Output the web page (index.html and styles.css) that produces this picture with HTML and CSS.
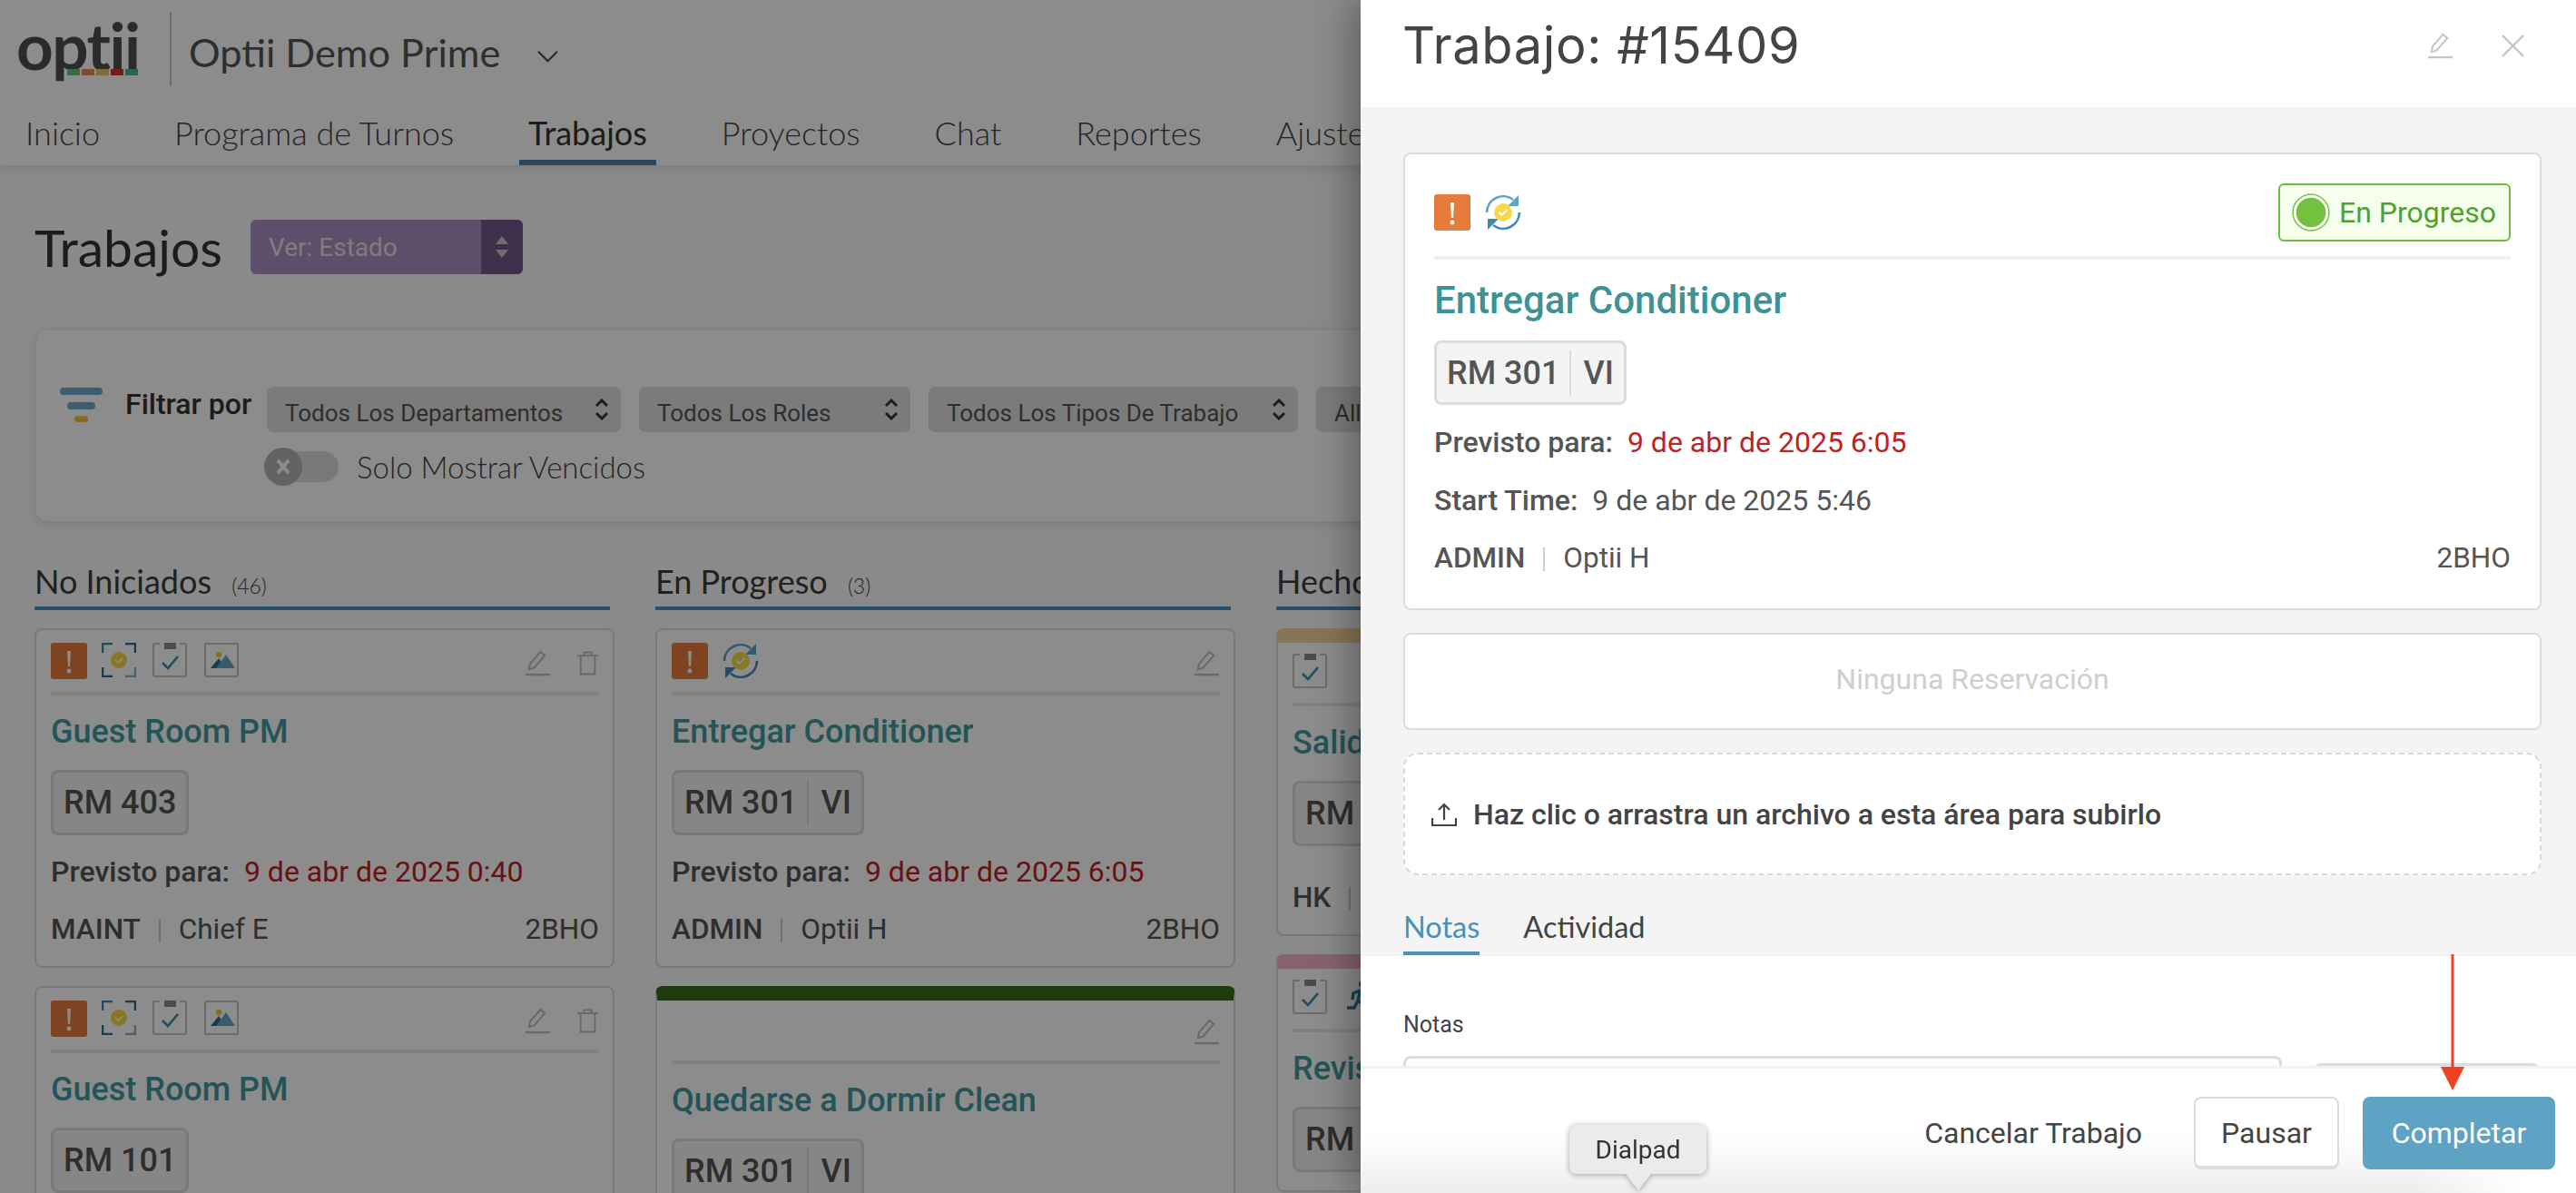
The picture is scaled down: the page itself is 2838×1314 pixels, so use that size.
FILE: index.html
```html
<!DOCTYPE html>
<html lang="es">
<head>
<meta charset="utf-8">
<title>Trabajos</title>
<link rel="stylesheet" href="styles.css">
</head>
<body>
<svg class="sprite" aria-hidden="true">
  <symbol id="i-alert" viewBox="0 0 40 40"><rect width="40" height="40" rx="3" fill="#e57b3c"/><path d="M18 9h4l-1 17h-2z" fill="#fff"/><circle cx="20" cy="31" r="2.4" fill="#fff"/></symbol>
  <symbol id="i-target" viewBox="0 0 38 38"><path d="M1 11V1h11" fill="none" stroke="#3d87ad" stroke-width="2.5"/><path d="M26 1h11v10" fill="none" stroke="#286e93" stroke-width="2.5"/><path d="M1 27v10h11" fill="none" stroke="#286e93" stroke-width="2.5"/><path d="M26 37h11V27" fill="none" stroke="#7fb0c8" stroke-width="2.5"/><circle cx="19" cy="19" r="9" fill="#f6d740"/><path d="M15 19l3 3 5-5" fill="none" stroke="#fff" stroke-width="1.6"/></symbol>
  <symbol id="i-clip" viewBox="0 0 38 38"><path d="M8 1H2a1 1 0 0 0-1 1v33a2 2 0 0 0 2 2h32a2 2 0 0 0 2-2V2a1 1 0 0 0-1-1h-6" fill="none" stroke="#c4c4c4" stroke-width="2"/><rect x="13" width="13" height="7" fill="#8b8b8b"/><path d="M11 22l6 6 11-13" fill="none" stroke="#3d8ab3" stroke-width="2.6"/></symbol>
  <symbol id="i-image" viewBox="0 0 38 38"><rect x="1" y="1" width="36" height="36" rx="2" fill="none" stroke="#c4c4c4" stroke-width="2"/><circle cx="16" cy="13" r="3.2" fill="#f4cd3a"/><path d="M7 28l9-11 5 7-3 4z" fill="#286e93"/><path d="M13 28l11-15 10 15z" fill="#6ea6c2"/></symbol>
  <symbol id="i-sync" viewBox="0 0 40 40"><path d="M2 20A18 18 0 0 1 31 6" fill="none" stroke="#5aa5c8" stroke-width="2.6"/><path d="M38 20A18 18 0 0 1 9 34" fill="none" stroke="#3d8ab3" stroke-width="2.6"/><path d="M37 1v12H25z" fill="#5aa5c8"/><path d="M3 39V27h12z" fill="#3d8ab3"/><circle cx="20" cy="20" r="10" fill="#f6d94a"/><path d="M15.500 20l3 3 6-6" fill="none" stroke="#fff" stroke-width="1.800"/></symbol>
  <symbol id="i-pen" viewBox="0 0 30 30"><path d="M5 22l1-6L18 2l5 4-12 14z" fill="none" stroke="currentColor" stroke-width="2"/><path d="M1 28h28" stroke="currentColor" stroke-width="2.400"/></symbol>
  <symbol id="i-trash" viewBox="0 0 26 30"><path d="M0 6h25M8 6V2h9v4M4 6v22h17V6" fill="none" stroke="currentColor" stroke-width="2"/></symbol>
  <symbol id="i-run" viewBox="0 0 30 38"><circle cx="19" cy="5" r="4" fill="#2f7a9e"/><path d="M17 11l-3 12 7 5-1 9M14 23l-4 8H2M16 12l-7 3-1 7M18 12l3 7 6 2" fill="none" stroke="#2f7a9e" stroke-width="3.500"/></symbol>
</svg>

<div class="app">
  <header class="topbar">
    <div class="brand">
      <div class="logo"><span class="logo-word">optii</span>
        <span class="logo-bars"><i class="b1"></i><i class="b2"></i><i class="b3"></i><i class="b4"></i><i class="b5"></i></span>
      </div>
      <div class="brand-name">Optii Demo Prime</div>
      <svg class="chev" viewBox="0 0 26 16"><path d="M1 2l12 12L25 2" fill="none" stroke="#4a4a4a" stroke-width="2.400"/></svg>
    </div>
    <nav class="nav">
      <a>Inicio</a><a>Programa de Turnos</a><a class="active">Trabajos</a><a>Proyectos</a><a>Chat</a><a>Reportes</a><a>Ajustes</a>
    </nav>
  </header>

  <main class="page">
    <div class="title-row">
      <h1>Trabajos</h1>
      <div class="view-select"><span class="view-label">Ver: Estado</span>
        <span class="view-arrows"><svg viewBox="0 0 14 24"><path d="M7 0l7 9H0zM7 24l7-9H0z" fill="#c9c9c9"/></svg></span>
      </div>
    </div>

    <section class="filters">
      <svg class="filter-icon" viewBox="0 0 47 38"><rect width="47" height="8" rx="4" fill="#6fa8cb"/><rect x="8" y="16" width="31" height="8" rx="4" fill="#6fa8cb"/><rect x="16" y="31" width="15" height="7" rx="3.500" fill="#f0c24a"/></svg>
      <div class="filter-label">Filtrar por</div>
      <div class="filter-main">
        <div class="selects">
          <div class="sel s1">Todos Los Departamentos<svg viewBox="0 0 14 24"><path d="M1 8l6-6 6 6M1 16l6 6 6-6" fill="none" stroke="#333" stroke-width="3"/></svg></div>
          <div class="sel s2">Todos Los Roles<svg viewBox="0 0 14 24"><path d="M1 8l6-6 6 6M1 16l6 6 6-6" fill="none" stroke="#333" stroke-width="3"/></svg></div>
          <div class="sel s3">Todos Los Tipos De Trabajo<svg viewBox="0 0 14 24"><path d="M1 8l6-6 6 6M1 16l6 6 6-6" fill="none" stroke="#333" stroke-width="3"/></svg></div>
          <div class="sel s4">All<svg viewBox="0 0 14 24"><path d="M1 8l6-6 6 6M1 16l6 6 6-6" fill="none" stroke="#333" stroke-width="3"/></svg></div>
        </div>
        <div class="toggle-row">
          <div class="toggle"><span class="knob"><svg viewBox="0 0 16 18"><path d="M2 2l12 14M14 2L2 16" stroke="#fff" stroke-width="4"/></svg></span></div>
          <span>Solo Mostrar Vencidos</span>
        </div>
      </div>
    </section>

    <div class="board">
      <section class="col">
        <h2>No Iniciados <small>(46)</small></h2>
        <article class="card">
          <div class="head">
            <svg class="ico"><use href="#i-alert"/></svg><svg class="ico ico-s"><use href="#i-target"/></svg><svg class="ico ico-s"><use href="#i-clip"/></svg><svg class="ico ico-s"><use href="#i-image"/></svg>
            <span class="actions"><svg class="act"><use href="#i-pen"/></svg><svg class="act-t"><use href="#i-trash"/></svg></span>
          </div>
          <h3>Guest Room PM</h3>
          <div class="room">RM 403</div>
          <p class="due"><b>Previsto para:</b><span class="late">9 de abr de 2025 0:40</span></p>
          <p class="meta"><b>MAINT</b><i></i><span>Chief E</span><em>2BHO</em></p>
        </article>
        <article class="card">
          <div class="head">
            <svg class="ico"><use href="#i-alert"/></svg><svg class="ico ico-s"><use href="#i-target"/></svg><svg class="ico ico-s"><use href="#i-clip"/></svg><svg class="ico ico-s"><use href="#i-image"/></svg>
            <span class="actions"><svg class="act"><use href="#i-pen"/></svg><svg class="act-t"><use href="#i-trash"/></svg></span>
          </div>
          <h3>Guest Room PM</h3>
          <div class="room">RM 101</div>
        </article>
      </section>

      <section class="col">
        <h2>En Progreso <small>(3)</small></h2>
        <article class="card">
          <div class="head">
            <svg class="ico"><use href="#i-alert"/></svg><svg class="ico ico-l"><use href="#i-sync"/></svg>
            <span class="actions"><svg class="act"><use href="#i-pen"/></svg></span>
          </div>
          <h3>Entregar Conditioner</h3>
          <div class="room">RM 301<i></i>VI</div>
          <p class="due"><b>Previsto para:</b><span class="late">9 de abr de 2025 6:05</span></p>
          <p class="meta"><b>ADMIN</b><i></i><span>Optii H</span><em>2BHO</em></p>
        </article>
        <article class="card barred bar-green">
          <div class="head">
            <span class="actions"><svg class="act"><use href="#i-pen"/></svg></span>
          </div>
          <h3>Quedarse a Dormir Clean</h3>
          <div class="room">RM 301<i></i>VI</div>
        </article>
      </section>

      <section class="col">
        <h2>Hecho <small>(12)</small></h2>
        <article class="card barred bar-tan">
          <div class="head"><svg class="ico ico-c"><use href="#i-clip"/></svg></div>
          <h3>Salida</h3>
          <div class="room">RM 205</div>
          <p class="meta spaced"><b>HK</b><i></i></p>
        </article>
        <article class="card barred bar-pink">
          <div class="head"><svg class="ico ico-c"><use href="#i-clip"/></svg><svg class="ico ico-s"><use href="#i-run"/></svg></div>
          <h3>Revisión</h3>
          <div class="room">RM 112</div>
        </article>
      </section>
    </div>
  </main>
</div>

<div class="scrim"></div>

<aside class="drawer">
  <header class="d-head">
    <h2>Trabajo: #15409</h2>
    <svg class="d-pen"><use href="#i-pen"/></svg>
    <svg class="d-close" viewBox="0 0 26 26"><path d="M1 1l24 24M25 1L1 25" stroke="#c4c4c4" stroke-width="2.400"/></svg>
  </header>
  <div class="d-body">
    <section class="d-card">
      <div class="d-top">
        <svg class="ico"><use href="#i-alert"/></svg><svg class="ico ico-l"><use href="#i-sync"/></svg>
        <div class="status"><span class="dot"></span>En Progreso</div>
      </div>
      <h3>Entregar Conditioner</h3>
      <div class="room">RM 301<i></i>VI</div>
      <p class="due"><b>Previsto para:</b><span class="late">9 de abr de 2025 6:05</span></p>
      <p class="due due-2"><b>Start Time:</b><span>9 de abr de 2025 5:46</span></p>
      <p class="meta"><b>ADMIN</b><i></i><span>Optii H</span><em>2BHO</em></p>
    </section>
    <section class="d-empty">Ninguna Reservación</section>
    <section class="d-upload">
      <svg viewBox="0 0 28 26"><path d="M14 19V2M8 8l6-6 6 6M1 17v8h26v-8" fill="none" stroke="#444" stroke-width="2.200"/></svg>
      <span>Haz clic o arrastra un archivo a esta área para subirlo</span>
    </section>
    <div class="tabs"><a class="on">Notas</a><a>Actividad</a></div>
    <div class="panel">
      <div class="panel-label">Notas</div>
      <div class="panel-fields"><div class="note-box"></div><div class="side-box"></div></div>
    </div>
  </div>
  <footer class="d-foot">
    <a class="link">Cancelar Trabajo</a>
    <a class="btn">Pausar</a>
    <a class="btn primary">Completar</a>
  </footer>
  <div class="tip">Dialpad</div>
  <svg class="pointer" viewBox="0 0 26 150"><path d="M11.500 0h3v124h-3z" fill="#ef4123"/><path d="M0 124h26l-13 26z" fill="#ef4123"/></svg>
</aside>
</body>
</html>
```

FILE: styles.css
```css
* { box-sizing: border-box; }
html, body { margin: 0; height: 100%; }
body {
  width: 2838px;
  height: 1314px;
  overflow: hidden;
  position: relative;
  font-family: Roboto, "Liberation Sans", sans-serif;
  color: #4a4a4a;
  background: #fbfbfb;
}
.sprite { display: none; }
h1, h2, h3, p { margin: 0; font-weight: normal; }
a { text-decoration: none; color: inherit; }

/* top bar */
.topbar { height: 182px; background: #fff; box-shadow: 0 3px 14px rgba(0,0,0,.12); position: relative; }
.brand { height: 106px; display: flex; align-items: center; padding-left: 18px; }
.logo { position: relative; width: 134px; height: 82px; margin-top: 14px; }
.logo-word { display: block; font-family: Lato, sans-serif; font-weight: 700; font-size: 71px; line-height: 62px; color: #4f4f4f; letter-spacing: -1.500px; }
.logo-bars { position: absolute; left: 56px; top: 57px; display: flex; gap: 2px; }
.logo-bars i { width: 14px; height: 7px; }
.b1 { background: #7db87a; } .b2 { background: #e88a58; } .b3 { background: #e9c464; } .b4 { background: #d23333; } .b5 { background: #4fb3a1; }
.brand-name { margin-left: 35px; padding-left: 19px; height: 82px; line-height: 88px; border-left: 2px solid #c8c8c8; font-family: Lato, sans-serif; font-size: 43.300px; color: #555; margin-top: 2px; }
.chev { width: 25px; height: 14px; margin: 18px 0 0 40px; }
.nav { display: flex; gap: 62px; padding-left: 18px; height: 76px; font-family: Lato, sans-serif; font-weight: 300; font-size: 36px; color: #444; }
.nav a { padding: 5px 10px 0; line-height: 70px; height: 76px; }
.nav a.active { font-weight: 400; color: #333; border-bottom: 6px solid #5086a7; }

/* page */
.page { padding: 0 38px; }
.title-row { display: flex; align-items: center; height: 120px; margin-top: 30px; }
.title-row h1 { font-family: Lato, sans-serif; font-size: 57px; color: #333; width: 238px; }
.view-select { display: flex; width: 300px; height: 60px; border-radius: 6px; overflow: hidden; background: #a98fc0; color: #e4e4e4; font-size: 28px; align-items: center; }
.view-label { flex: 1; padding-left: 20px; }
.view-arrows { width: 46px; height: 60px; background: #745889; display: flex; align-items: center; justify-content: center; }
.view-arrows svg { width: 14px; height: 24px; }

.filters { display: flex; align-items: flex-start; margin: 32px 0 0 2px; height: 210px; width: 2760px; padding: 62px 0 0 26px; background: #fff; border-radius: 12px; box-shadow: 0 2px 12px rgba(0,0,0,.14); overflow: hidden; }
.filter-icon { width: 47px; height: 38px; flex: none; margin-top: 1px; }
.filter-label { width: 156px; margin-left: 25px; font-size: 32px; font-weight: 500; color: #333; line-height: 38px; flex: none; white-space: nowrap; }
.selects { display: flex; gap: 20px; }
.sel { height: 50px; display: flex; align-items: center; justify-content: space-between; background: #e0e0e0; border-radius: 7px; padding: 8px 14px 0 20px; font-size: 26px; color: #555; flex: none; }
.sel svg { width: 14px; height: 24px; margin-top: -8px; }
.s1 { width: 390px; } .s2 { width: 299px; } .s3 { width: 407px; } .s4 { width: 300px; }
.toggle-row { display: flex; align-items: center; gap: 20px; margin: 18px 0 0 -3px; font-family: Lato, sans-serif; font-weight: 300; font-size: 33px; color: #444; }
.toggle { width: 82px; height: 34px; background: #ddd; border-radius: 17px; display: flex; align-items: center; }
.knob { width: 42px; height: 42px; border-radius: 50%; background: #b5b5b5; display: flex; align-items: center; justify-content: center; }
.knob svg { width: 16px; height: 18px; }

/* board */
.board { display: grid; grid-template-columns: repeat(3, 634px); gap: 50px; margin-top: 48px; }
.col h2 { height: 50px; border-bottom: 4px solid #4a91bd; font-family: Lato, sans-serif; font-size: 36px; line-height: 36px; color: #3c3c3c; margin-bottom: 20px; width: 634px; }
.col small { font-size: 23px; font-weight: 300; margin-left: 13px; color: #444; }
.card { width: 639px; background: #fff; border: 2px solid #dcdcdc; border-radius: 8px; padding: 14px 15px 20px 16px; margin-bottom: 20px; }
.barred { padding-top: 12px; border-top-width: 16px; border-radius: 8px; }
.bar-green { border-top-color: #386b1d; }
.bar-tan { border-top-color: #f3d79c; }
.bar-pink { border-top-color: #f3b5c8; }
.head { display: flex; align-items: flex-start; height: 54px; position: relative; }
.head::after { content: ""; position: absolute; left: 0; right: 0; top: 54px; height: 4px; background: #e9e9e9; }
.ico { width: 40px; height: 40px; flex: none; display: block; }
.ico-s { width: 38px; height: 38px; margin-left: 16px; }
.ico-l { margin-left: 16px; }
.ico-c { width: 38px; height: 38px; }
.head .ico-s + .ico-s { margin-left: 18px; }
.head .ico-s + .ico-s + .ico-s { margin-left: 19px; }
.actions { margin-left: auto; display: flex; gap: 29px; padding-top: 8px; color: #bdbdbd; }
.act { width: 29px; height: 29px; display: block; }
.act-t { width: 24px; height: 29px; display: block; }
.card h3 { margin-top: 20px; font-size: 36px; font-weight: 500; line-height: 48px; color: #439a9e; height: 48px; }
.room { display: inline-flex; align-items: center; margin-top: 18px; height: 72px; padding: 0 11px; border: 3px solid #dcdcdc; border-radius: 8px; background: #f4f4f4; font-size: 36px; font-weight: 500; color: #555; }
.room i { width: 2px; height: 50px; background: #dcdcdc; margin: 0 13px 0 11px; }
.due { margin-top: 20px; height: 40px; line-height: 40px; font-size: 32px; white-space: nowrap; display: flex; }
.due b { font-weight: 500; color: #555; }
.due span { margin-left: 16px; color: #555; }
.due .late { color: #bf2224; }
.meta { margin-top: 24px; height: 40px; line-height: 40px; font-size: 31.500px; display: flex; align-items: center; color: #555; }
.meta.spaced { margin-top: 37px; }
.meta b { font-weight: 500; }
.meta i { width: 2px; height: 26px; background: #ccc; margin: 2px 20px 0 20px; }
.meta em { font-style: normal; margin-left: auto; }

/* scrim */
.scrim { position: absolute; inset: 0; background: rgba(0,0,0,.45); }

/* drawer */
.drawer { position: absolute; top: 0; right: 0; bottom: 0; width: 1339px; display: flex; flex-direction: column; background: #fff; box-shadow: -8px 0 40px rgba(0,0,0,.35); }
.d-head { height: 121px; flex: none; display: flex; align-items: flex-start; padding: 14px 57px 0 46px; border-bottom: 3px solid #f1f1f1; }
.d-head h2 { font-family: Inter, sans-serif; font-size: 56px; letter-spacing: .6px; line-height: 72px; color: #444; }
.d-pen { width: 29px; height: 29px; margin: 22px 0 0 auto; color: #c4c4c4; }
.d-close { width: 25px; height: 25px; margin: 24px 0 0 53px; }
.d-body { flex: 1; min-height: 0; overflow: hidden; background: #f4f4f4; padding: 47px 38px 0 47px; }
.d-card { background: #fff; border: 2px solid #dcdcdc; border-radius: 8px; height: 504px; padding: 32px; }
.d-top { display: flex; align-items: center; height: 64px; position: relative; }
.d-top::after { content: ""; position: absolute; left: 0; right: 0; top: 80px; height: 4px; background: #f0f0f0; }
.status { margin-left: auto; display: flex; align-items: center; height: 64px; padding: 0 16px 0 14px; width: 256px; border: 2px solid #6cbf3e; border-radius: 6px; background: #f6ffed; color: #52a02f; font-size: 32px; white-space: nowrap; }
.dot { width: 40px; height: 40px; margin-right: 11px; border-radius: 50%; background: #73c13e; border: 3px solid #fff; box-shadow: 0 0 0 1.500px #73c13e; flex: none; transform: scale(.96); }
.d-card h3 { margin-top: 41px; font-size: 42px; font-weight: 500; line-height: 48px; color: #3e9296; }
.d-card .room { margin-top: 20px; height: 71px; }
.d-card .due { margin-top: 21px; }
.d-card .due-2 { margin-top: 24px; }
.d-card .meta { margin-top: 24px; }
.d-empty { margin-top: 25px; height: 107px; padding-bottom: 6px; background: #fff; border: 2px solid #dcdcdc; border-radius: 8px; display: flex; align-items: center; justify-content: center; font-size: 32px; color: #cfcfcf; }
.d-upload { margin-top: 25px; height: 135px; background: #fff; border: 2px dashed #d9d9d9; border-radius: 16px; display: flex; align-items: center; gap: 18px; padding-left: 29px; font-size: 32px; font-weight: 500; color: #444; }
.d-upload svg { width: 28px; height: 26px; }
.tabs { display: flex; gap: 48px; margin-top: 30px; height: 58px; font-size: 32.500px; font-family: Lato, sans-serif; color: #444; }
.tabs a { line-height: 54px; height: 58px; }
.tabs a.on { color: #4a91b8; border-bottom: 4px solid #4a91b8; }
.panel { margin: 0 -38px 0 -47px; padding: 54px 38px 0 47px; background: #fff; height: 200px; border-top: 1px solid #f0f0f0; }
.panel-label { font-size: 25px; line-height: 44px; color: #444; }
.panel-fields { display: flex; margin-top: 12px; gap: 35px; align-items: flex-start; }
.note-box { width: 968px; height: 60px; background: #fff; border: 3px solid #dcdcdc; border-radius: 8px; }
.side-box { width: 249px; height: 60px; margin-top: 8px; border: 3px solid #dcdcdc; border-radius: 8px; }
.d-foot { height: 140px; flex: none; display: flex; justify-content: flex-end; align-items: flex-start; padding: 31px 23px 0 0; border-top: 3px solid #f1f1f1; background: radial-gradient(circle 180px at 100% 100%, #fff 30%, rgba(255,255,255,0) 100%), linear-gradient(#fff 50%, #f9f9f9 70%, #ededed 100%); position: relative; }
.link { font-size: 32px; line-height: 80px; margin-right: 57px; color: #444; }
.btn { height: 80px; line-height: 76px; text-align: center; font-size: 32px; color: #444; width: 160px; background: #fff; border: 2px solid #dcdcdc; border-bottom-width: 4px; border-radius: 8px; }
.primary { width: 212px; margin-left: 26px; background: #5fa3c4; color: #fff; border: 0; line-height: 80px; }
.tip { position: absolute; left: 230px; top: 1239px; width: 151px; height: 54px; display: flex; align-items: center; justify-content: center; background: #ebebeb; border-radius: 8px; font-size: 28px; color: #333; filter: drop-shadow(0 1px 3px rgba(0,0,0,.35)); }
.tip::after { content: ""; position: absolute; left: 62px; top: 54px; border-left: 14px solid transparent; border-right: 14px solid transparent; border-top: 18px solid #ebebeb; }
.pointer { position: absolute; left: 1190px; top: 1051px; width: 26px; height: 150px; }
```
